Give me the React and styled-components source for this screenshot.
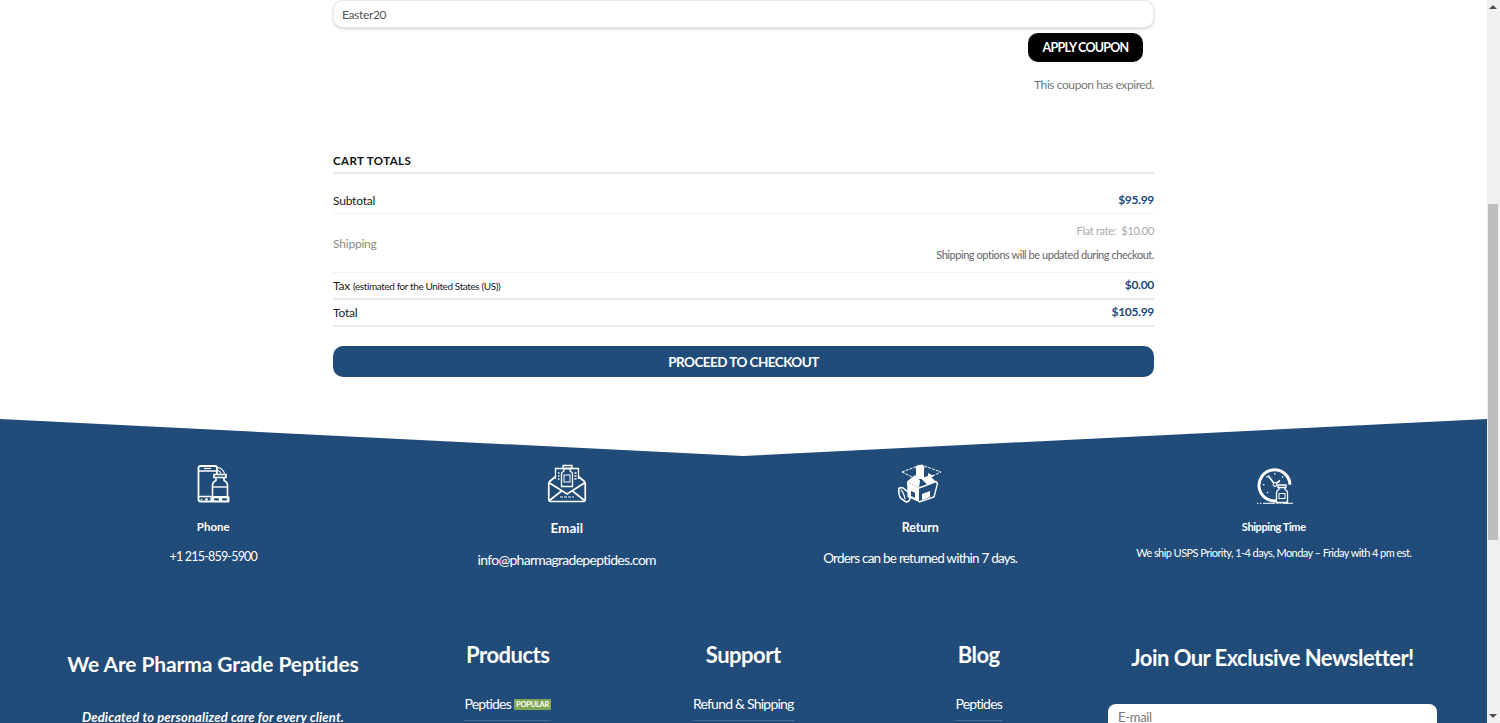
import React from "react";
import styled, { createGlobalStyle } from "styled-components";

const Global = createGlobalStyle`
  html, body { margin: 0; padding: 0; background: #fff; overflow: hidden; }
  body { font-family: "Lato", "Noto Sans", sans-serif; }
  * { box-sizing: border-box; }
`;

const navy = "#214b78";

const Frame = styled.div`
  display: flex;
  width: 1500px;
  height: 723px;
  overflow: hidden;
`;
const Page = styled.div`
  width: 1487px;
  flex: none;
`;
const Scrollbar = styled.div`
  width: 13px;
  height: 723px;
  flex: none;
  background: #f1f1f1;
  position: relative;
`;
const Thumb = styled.div`
  position: absolute;
  top: 204px;
  left: 1px;
  width: 10px;
  height: 336px;
  background: #bdbdbd;
`;
const ArrowUp = styled.div`
  position: absolute;
  top: 5px;
  left: 2px;
  width: 0;
  height: 0;
  border-left: 4px solid transparent;
  border-right: 4px solid transparent;
  border-bottom: 4px solid #505050;
`;
const ArrowDown = styled.div`
  position: absolute;
  bottom: 5px;
  left: 2px;
  width: 0;
  height: 0;
  border-left: 4px solid transparent;
  border-right: 4px solid transparent;
  border-top: 4px solid #505050;
`;

const Cart = styled.section`
  width: 821px;
  margin-left: 333px;
  height: 419px;
  display: flex;
  flex-direction: column;
`;
const CouponInput = styled.input`
  display: block;
  width: 100%;
  height: 28px;
  border: 1px solid #e8e8e8;
  border-radius: 10px;
  box-shadow: 0 1px 3px rgba(0, 0, 0, 0.18);
  padding: 0 8px;
  font: 400 12px "Lato", sans-serif;
  letter-spacing: -0.35px;
  color: #555;
  background: #fff;
  outline: none;
`;
const CouponButton = styled.button`
  align-self: flex-end;
  margin: 5px 11px 0 0;
  width: 115px;
  height: 29px;
  border: 0;
  border-radius: 10px;
  background: #000;
  color: #fff;
  font: 700 12.5px "Lato", sans-serif;
  letter-spacing: -0.75px;
  padding: 0;
`;
const CouponNote = styled.p`
  margin: 15px 0 0;
  text-align: right;
  font-size: 12px;
  line-height: 16px;
  letter-spacing: -0.42px;
  color: #777;
`;
const TotalsHead = styled.h2`
  margin: 60px 0 0;
  padding-bottom: 3px;
  font-size: 11.5px;
  line-height: 16px;
  font-weight: 700;
  letter-spacing: 0.4px;
  color: #111;
  border-bottom: 2px solid #e9e9e9;
`;
const Row = styled.div`
  display: flex;
  justify-content: space-between;
  align-items: center;
  height: ${(p) => p.$h}px;
  padding: ${(p) => p.$pt || 0}px 0 0;
  border-bottom: ${(p) => p.$line}px solid ${(p) => (p.$line > 1 ? "#e9e9e9" : "#f0f0f0")};
`;
const RowLabel = styled.span`
  font-size: 12px;
  letter-spacing: -0.2px;
  color: ${(p) => (p.$muted ? "#8a8a8a" : "#222")};
`;
const TaxNote = styled.small`
  font-size: 10px;
  letter-spacing: -0.4px;
  color: #222;
`;
const Amount = styled.span`
  font-size: 12px;
  font-weight: 700;
  letter-spacing: -0.3px;
  margin-top: ${(p) => p.$top || 0}px;
  color: ${navy};
`;
const ShippingInfo = styled.div`
  display: flex;
  flex-direction: column;
  align-items: flex-end;
  gap: 10px;
  font-size: 11px;
  line-height: 14px;
  letter-spacing: -0.45px;
  color: #666;
`;
const FlatRate = styled.span`
  color: #aaa;
  font-size: 11px;
  letter-spacing: -0.3px;
`;
const Checkout = styled.button`
  display: block;
  width: 100%;
  height: 31px;
  margin-top: 19px;
  border: 0;
  border-radius: 10px;
  background: ${navy};
  color: #fff;
  font: 700 13.5px "Lato", sans-serif;
  letter-spacing: -0.55px;
  padding: 0;
`;

const Footer = styled.footer`
  background: ${navy};
  color: #fff;
  height: 304px;
  overflow: hidden;
`;
const Notch = styled.svg`
  display: block;
  width: 1487px;
  height: 38px;
`;
const InfoGrid = styled.div`
  display: grid;
  grid-template-columns: repeat(4, 353.5px);
  padding: 7px 36.5px 0;
`;
const InfoCell = styled.div`
  display: flex;
  flex-direction: column;
  align-items: center;
  text-align: center;
`;
const IconBox = styled.svg`
  display: block;
  width: ${(p) => p.$w || 44}px;
  height: 44px;
`;
const InfoTitle = styled.div`
  margin-top: ${(p) => p.$top}px;
  font-weight: 700;
  font-size: ${(p) => p.$size}px;
  letter-spacing: ${(p) => p.$ls || 0}px;
  line-height: 18px;
`;
const InfoText = styled.div`
  margin-top: ${(p) => p.$top}px;
  font-size: ${(p) => p.$size}px;
  letter-spacing: ${(p) => p.$ls}px;
  line-height: 18px;
`;
const LinkGrid = styled.div`
  display: grid;
  grid-template-columns: 354px 235.5px 235.5px 235.5px 352px;
  padding: 0 36px;
  margin-top: ${(p) => p.$top}px;
`;
const LinkCol = styled.div`
  display: flex;
  flex-direction: column;
  align-items: center;
  padding-top: ${(p) => p.$top}px;
`;
const ColHead = styled.h3`
  margin: 0;
  font-size: ${(p) => p.$size}px;
  letter-spacing: ${(p) => p.$ls}px;
  line-height: 28px;
  font-weight: 700;
  white-space: nowrap;
`;
const Tagline = styled.p`
  margin: 30px 0 0;
  font-size: 13px;
  line-height: 18px;
  font-weight: 700;
  font-style: italic;
  letter-spacing: 0.15px;
`;
const FooterLink = styled.a`
  display: flex;
  align-items: center;
  gap: 3px;
  margin-top: 26px;
  padding-bottom: 7px;
  font-size: 14px;
  line-height: 18px;
  letter-spacing: -0.78px;
  color: #fff;
  border-bottom: 1px solid rgba(255, 255, 255, 0.18);
`;
const Badge = styled.span`
  background: #7fa653;
  color: #fff;
  font-size: 7.5px;
  line-height: 11px;
  font-weight: 700;
  letter-spacing: -0.25px;
  padding: 0 2px;
  border-radius: 1px;
`;
const EmailField = styled.input`
  display: block;
  width: 329px;
  height: 36px;
  margin: 32px 0 0;
  border: 0;
  border-radius: 8px;
  background: #fff;
  padding: 0 10px 10px 10px;
  font: 400 13px "Lato", sans-serif;
  letter-spacing: -0.3px;
  outline: none;
  &::placeholder { color: #777; opacity: 1; }
`;

const PhoneIcon = () => (
  <IconBox viewBox="0 0 44 44" fill="none" stroke="#fff" strokeWidth="1.8">
    <path d="M20 37.5H9.5Q7.5 37.5 7.5 35.5V4Q7.5 2 9.5 2H24Q26 2 26 4V10" />
    <path d="M7.5 7H26M7.5 32.5H20" strokeWidth="1.4" />
    <path d="M13 4.5h7" strokeWidth="1.2" />
    <circle cx="15.5" cy="35.5" r="1.4" fill="#fff" stroke="none" />
    <circle cx="10.5" cy="35.5" r=".8" fill="#fff" stroke="none" />
    <path d="M27 3.5q5 1.2 6.5 6M27 6.5q2.4.6 3 3" strokeWidth="1.1" />
    <path d="M23 10.5h12v3H23zM25 13.5v3q-3.5 1.5-3.5 5V32M33 13.5v3q3.5 1.5 3.5 5V32" strokeWidth="1.6" />
    <path d="M21.5 23h15" strokeWidth="1.4" />
    <rect x="19.5" y="32" width="19" height="6.5" rx="1.5" fill="#fff" stroke="none" />
    <rect x="23" y="34.2" width="5" height="2.2" rx="1" fill={navy} stroke="none" />
    <rect x="31" y="34.2" width="5" height="2.2" rx="1" fill={navy} stroke="none" />
  </IconBox>
);

const MailIcon = () => (
  <IconBox viewBox="0 0 44 44" fill="none" stroke="#fff" strokeWidth="1.7">
    <path d="M10.5 15V4.5h23V15" strokeWidth="1.3" />
    <path d="M4 18L10.5 12.5M40 18L33.5 12.5" />
    <path d="M3.75 18.5V35Q3.75 37.5 6 37.5H38Q40.25 37.5 40.25 35V18.5" />
    <path d="M3.75 18.5L22 30L40.25 18.5" />
    <path d="M4.5 36.5L16.5 27M39.5 36.5L27.5 27" />
    <path d="M18 1.5h9v3h-9zM19 4.5v2.5q-2.5 1-2.5 3.5V22.5h11V10.5q0-2.5-2.5-3.5V4.5" strokeWidth="1.3" />
    <rect x="19" y="11" width="6" height="7" strokeWidth="1" />
    <path d="M13 9h1.5M13 12h1.5M13 15h1.5M29.5 9h2M29.5 12h2M29.5 15h2" strokeWidth="1.3" />
    <path d="M15 33h14" strokeWidth="1" strokeDasharray="3 1" />
  </IconBox>
);

const BoxIcon = () => (
  <IconBox $w={46} viewBox="0 0 46 44" fill="none" stroke="#fff" strokeWidth="1">
    <path d="M5 8L24 .8 44 8 27 16M5 8l12 6" strokeDasharray="3 1" />
    <ellipse cx="23" cy="4" rx="4.5" ry="3" fill="#fff" stroke="none" />
    <path d="M19 5h8v10h-8z" fill="#fff" stroke="none" />
    <path d="M31 9l6 3-6 3.5z" fill="#fff" stroke="none" />
    <path d="M10 17.5l8-6.5 5 5.5-1 7.5z" fill="#fff" stroke="none" />
    <path d="M10 17.5L22 24V38L10.5 33z" fill="#fff" stroke="none" />
    <path d="M22 24l17-6.5 1.5 2-3.5 13.5L22 38" fill="none" strokeWidth="1.4" />
    <path d="M24 14.5l6 6 9-3-7-6z" fill="#fff" stroke="none" />
    <path d="M25 30l8-3v6l-8 3z" fill="#fff" stroke="none" />
    <path d="M14 27v5l4 1.7v-5z" fill={navy} stroke="none" />
    <path d="M2 24.5q-1 6 2 10l5 3.5q3.5 0 4-4l-1-5-6-5q-3-1-4 .5z" strokeWidth="1.6" />
    <path d="M4 26q3 3 4 9" strokeWidth="1.2" />
  </IconBox>
);

const ClockIcon = () => (
  <IconBox viewBox="0 0 44 44" fill="none" stroke="#fff">
    <path d="M27 36.2A15.5 15.5 0 1 1 38 20.7" strokeWidth="3" />
    <path d="M22.8 9v1.5M11 20.7h1.5M14.5 12.5l1 1M31 12.5l-1 1M15 29l1-1" strokeWidth="1.2" />
    <path d="M16 11.5l7 9 5-4" strokeWidth="1.7" />
    <circle cx="23" cy="20.5" r="1.8" strokeWidth="1.2" fill={navy} />
    <path d="M26 21h8v2.5h-8zM27 23.5v2q-2.5 1-2.5 3.5V38.5h11V29q0-2.5-2.5-3.5v-2" strokeWidth="1.3" fill={navy} />
    <rect x="27" y="29.5" width="6" height="5" strokeWidth="1" />
    <path d="M5 39.3h36" strokeWidth="1" strokeDasharray="1.5 1.5 1.5 1.5 12 1.5" />
  </IconBox>
);

export default function App() {
  return (
    <Frame>
      <Global />
      <Page>
        <Cart>
          <CouponInput readOnly value="Easter20" />
          <CouponButton>APPLY COUPON</CouponButton>
          <CouponNote>This coupon has expired.</CouponNote>
          <TotalsHead>CART TOTALS</TotalsHead>
          <Row $h={40} $line={1} $pt={13}>
            <RowLabel>Subtotal</RowLabel>
            <Amount $top={-2}>$95.99</Amount>
          </Row>
          <Row $h={59} $line={1}>
            <RowLabel $muted>Shipping</RowLabel>
            <ShippingInfo>
              <FlatRate>Flat rate:&nbsp; $10.00</FlatRate>
              <span>Shipping options will be updated during checkout.</span>
            </ShippingInfo>
          </Row>
          <Row $h={27} $line={2}>
            <RowLabel>
              Tax <TaxNote>(estimated for the United States (US))</TaxNote>
            </RowLabel>
            <Amount $top={-2}>$0.00</Amount>
          </Row>
          <Row $h={27} $line={2}>
            <RowLabel>Total</RowLabel>
            <Amount $top={-2}>$105.99</Amount>
          </Row>
          <Checkout>PROCEED TO CHECKOUT</Checkout>
        </Cart>
        <Footer>
          <Notch viewBox="0 0 1487 38" preserveAspectRatio="none">
            <polygon points="0,0 743,37 1487,0" fill="#fff" />
          </Notch>
          <InfoGrid>
            <InfoCell>
              <PhoneIcon />
              <InfoTitle $top={10} $size={11.5}>Phone</InfoTitle>
              <InfoText $top={12} $size={12.5} $ls={-0.8}>+1 215-859-5900</InfoText>
            </InfoCell>
            <InfoCell>
              <MailIcon />
              <InfoTitle $top={11} $size={13.5}>Email</InfoTitle>
              <InfoText $top={14} $size={14} $ls={-0.7}>info@pharmagradepeptides.com</InfoText>
            </InfoCell>
            <InfoCell>
              <BoxIcon />
              <InfoTitle $top={11} $size={12.5} $ls={-0.1}>Return</InfoTitle>
              <InfoText $top={12} $size={13.5} $ls={-0.77}>Orders can be returned within 7 days.</InfoText>
            </InfoCell>
            <InfoCell>
              <ClockIcon />
              <InfoTitle $top={10} $size={11} $ls={-0.4}>Shipping Time</InfoTitle>
              <InfoText $top={8} $size={11} $ls={-0.56}>We ship USPS Priority, 1-4 days, Monday – Friday with 4 pm est.</InfoText>
            </InfoCell>
          </InfoGrid>
          <LinkGrid $top={72}>
            <LinkCol $top={9}>
              <ColHead $size={21} $ls={-0.1}>We Are Pharma Grade Peptides</ColHead>
              <Tagline>Dedicated to personalized care for every client.</Tagline>
            </LinkCol>
            <LinkCol $top={0}>
              <ColHead $size={22} $ls={-0.5}>Products</ColHead>
              <FooterLink>
                Peptides <Badge>POPULAR</Badge>
              </FooterLink>
            </LinkCol>
            <LinkCol $top={0}>
              <ColHead $size={22} $ls={-0.5}>Support</ColHead>
              <FooterLink>Refund &amp; Shipping</FooterLink>
            </LinkCol>
            <LinkCol $top={0}>
              <ColHead $size={22} $ls={-0.5}>Blog</ColHead>
              <FooterLink>Peptides</FooterLink>
            </LinkCol>
            <LinkCol $top={3}>
              <ColHead $size={22} $ls={-0.55}>Join Our Exclusive Newsletter!</ColHead>
              <EmailField placeholder="E-mail" />
            </LinkCol>
          </LinkGrid>
        </Footer>
      </Page>
      <Scrollbar>
        <ArrowUp />
        <Thumb />
        <ArrowDown />
      </Scrollbar>
    </Frame>
  );
}
